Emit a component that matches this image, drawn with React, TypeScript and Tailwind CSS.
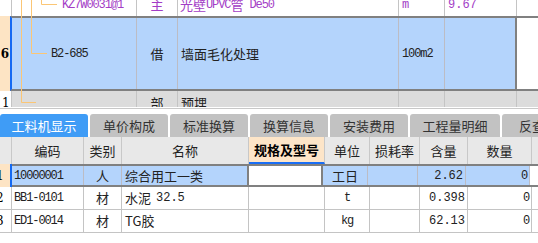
import React from "react";

const cjk = "font-['Noto_Sans_CJK_SC',sans-serif]";
const mono = "font-['Liberation_Mono','Noto_Sans_CJK_SC',monospace] text-[12px] tracking-[-1.1px]";

const tabs = [
  { label: "工料机显示", w: "w-[88px]", active: true },
  { label: "单价构成", w: "w-[78px]" },
  { label: "标准换算", w: "w-[78px]" },
  { label: "换算信息", w: "w-[78px]" },
  { label: "安装费用", w: "w-[78px]" },
  { label: "工程量明细", w: "w-[90px]" },
  { label: "反查", w: "w-[60px]" },
];

const headers = [
  { label: "编码", w: "w-[72px]" },
  { label: "类别", w: "w-[38px]" },
  { label: "名称", w: "w-[127px]" },
  { label: "规格及型号", w: "w-[76px]", hl: true },
  { label: "单位", w: "w-[45px]" },
  { label: "损耗率", w: "w-[50px]" },
  { label: "含量", w: "w-[48px]" },
  { label: "数量", w: "w-[64px]" },
];

const rows = [
  { n: "1", code: "10000001", type: "人", name: "综合用工一类", unit: "工日", qty: "2.62", num: "0", sel: true },
  { n: "2", code: "BB1-0101", type: "材", name: "水泥", spec: "32.5", unit: "t", qty: "0.398", num: "0" },
  { n: "3", code: "ED1-0014", type: "材", name: "TG胶", unit: "kg", qty: "62.13", num: "0" },
];

function TreeLines() {
  return (
    <svg className="absolute left-0 top-0 pointer-events-none" width="80" height="108">
      <g stroke="#fbc675" strokeWidth="1" fill="none">
        <path d="M41.5 0V4.5H57" />
        <path d="M31.5 0V53.5H47" />
        <path d="M21.5 0V102.5H36" />
      </g>
    </svg>
  );
}

export default function App() {
  return (
    <div className={`w-[538px] h-[243px] overflow-hidden bg-white text-[#222] ${cjk}`}>
      {/* upper grid */}
      <div className="relative h-[107px] overflow-hidden">
        <div className="flex h-[23px] -mt-[7px] text-[#a33dc6]">
          <div className="w-[12px] border-r border-[#c4c4c4]" />
          <div className="w-[125px] border-r border-[#c4c4c4] flex items-center pl-[50px]">
            <span className={mono}>KZ7W0031@1</span>
          </div>
          <div className="w-[41px] border-r border-[#c4c4c4] flex items-center justify-center text-[13px]">主</div>
          <div className="w-[221px] border-r border-[#c4c4c4] flex items-center pl-[2px] text-[13px] whitespace-nowrap">
            光壁<span className={mono}>UPVC</span>管<span className={`${mono} ml-[6px]`}>De50</span>
          </div>
          <div className="w-[46px] border-r border-[#c4c4c4] flex items-center pl-[3px]">
            <span className={mono}>m</span>
          </div>
          <div className="w-[72px] border-r border-[#c4c4c4] flex items-center pl-[3px]">
            <span className={`${mono} tracking-[0px]`}>9.67</span>
          </div>
          <div className="flex-1" />
        </div>

        <div className="flex h-[75px]">
          <div className="w-[10px] bg-[#fde4c4] flex items-center justify-center text-[12px] font-bold text-black font-['DejaVu_Serif',serif]">
            6
          </div>
          <div className="flex-1 flex border-y-2 border-[#808080] border-l-2 border-l-[#1569f2]">
            <div className="w-[125px] bg-[#b4d4fc] border-r border-[#bcbcc4] flex items-center pl-[39px]">
              <span className={mono}>B2-685</span>
            </div>
            <div className="w-[41px] bg-[#b4d4fc] border-r border-[#bcbcc4] flex items-center justify-center text-[13px]">借</div>
            <div className="w-[221px] bg-[#b4d4fc] border-r border-[#bcbcc4] flex items-center pl-[3px] text-[13px]">墙面毛化处理</div>
            <div className="w-[46px] bg-[#b4d4fc] border-r border-[#bcbcc4] flex items-center pl-[3px]">
              <span className={mono}>100m2</span>
            </div>
            <div className="w-[72px] bg-[#b4d4fc] border-r-2 border-[#808080]" />
            <div className="flex-1 bg-white" />
          </div>
        </div>

        <div className="flex h-[23px]">
          <div className="w-[12px] border-r border-[#c4c4c4] flex items-center pl-[2px] text-[12px] text-black font-['DejaVu_Serif',serif]">
            1
          </div>
          <div className="flex-1 flex bg-[#dcdcdc]">
            <div className="w-[125px] border-r border-[#c4c4c4]" />
            <div className="w-[41px] border-r border-[#c4c4c4] flex items-center justify-center text-[13px]">部</div>
            <div className="w-[221px] border-r border-[#c4c4c4] flex items-center pl-[3px] text-[13px]">预埋</div>
            <div className="w-[46px] border-r border-[#c4c4c4]" />
            <div className="w-[72px] border-r border-[#c4c4c4]" />
            <div className="flex-1" />
          </div>
        </div>
        <TreeLines />
      </div>

      <div className="h-[1px] bg-white" />
      <div className="h-[1px] bg-[#c8c8c8]" />
      <div className="h-[5px] bg-white" />

      {/* tabs */}
      <div className="flex gap-[2px] h-[23px] bg-white">
        {tabs.map((t) => (
          <div
            key={t.label}
            className={`${t.w} shrink-0 flex items-center justify-center text-[13px] rounded-t-[3px] whitespace-nowrap ${
              t.active ? "bg-[#3f9cf6] text-white rounded-none" : "bg-[#c2c2c2] text-[#333]"
            }`}
          >
            {t.label}
          </div>
        ))}
      </div>

      {/* header */}
      <div className="flex h-[27px] bg-[#e8e8e8] text-[13px] text-[#222]">
        <div className="w-[12px] border-r border-[#c8c8c8]" />
        {headers.map((h) => (
          <div
            key={h.label}
            className={`${h.w} shrink-0 flex items-center justify-center border-r border-[#c8c8c8] ${
              h.hl ? "bg-[#fde5c8] font-bold border-b-2 border-b-[#1a6ef5] text-black" : ""
            }`}
          >
            {h.label}
          </div>
        ))}
        <div className="flex-1" />
      </div>

      {/* rows */}
      {rows.map((r) =>
        r.sel ? (
          <div key={r.n} className="flex h-[23px]">
            <div className="w-[12px] bg-[#fde4c4] border-r-2 border-[#1569f2] overflow-hidden flex items-center">
              <span className="-ml-[4px] text-[12px] font-['DejaVu_Serif',serif] text-black">{r.n}</span>
            </div>
            <div className="flex-1 flex border-y-2 border-[#808080]">
              <div className="w-[72px] shrink-0 bg-[#b4d4fc] border-r border-[#bcbcc4] flex items-center pl-[2px]">
                <span className={mono}>{r.code}</span>
              </div>
              <div className="w-[38px] shrink-0 bg-[#b4d4fc] border-r border-[#bcbcc4] flex items-center justify-center text-[13px]">{r.type}</div>
              <div className="w-[127px] shrink-0 bg-[#b4d4fc] border-r-2 border-[#808080] flex items-center pl-[3px] text-[13px]">{r.name}</div>
              <div className="w-[74px] shrink-0 bg-white border-r-2 border-[#808080]" />
              <div className="w-[45px] shrink-0 bg-[#b4d4fc] border-r border-[#bcbcc4] flex items-center justify-center text-[13px]">{r.unit}</div>
              <div className="w-[50px] shrink-0 bg-[#b4d4fc] border-r border-[#bcbcc4]" />
              <div className="w-[48px] shrink-0 bg-[#b4d4fc] border-r border-[#bcbcc4] flex items-center justify-end pr-[2px]">
                <span className={`${mono} tracking-[0px]`}>{r.qty}</span>
              </div>
              <div className="w-[64px] shrink-0 bg-[#b4d4fc] border-r border-[#bcbcc4] flex items-center justify-end pr-[2px]">
                <span className={mono}>{r.num}</span>
              </div>
              <div className="flex-1 bg-white" />
            </div>
          </div>
        ) : (
          <div key={r.n} className="flex h-[23px] border-b border-[#c4c4c4]">
            <div className="w-[12px] bg-white border-r border-[#c4c4c4] overflow-hidden flex items-center">
              <span className="-ml-[4px] text-[12px] font-['DejaVu_Serif',serif] text-black">{r.n}</span>
            </div>
            <div className="w-[72px] shrink-0 border-r border-[#c4c4c4] flex items-center pl-[2px]">
              <span className={mono}>{r.code}</span>
            </div>
            <div className="w-[38px] shrink-0 border-r border-[#c4c4c4] flex items-center justify-center text-[13px]">{r.type}</div>
            <div className="w-[127px] shrink-0 border-r border-[#c4c4c4] flex items-center pl-[3px] text-[13px] whitespace-nowrap">
              {r.name}
              {r.spec && <span className={`${mono} ml-[5px] tracking-[0px]`}>{r.spec}</span>}
            </div>
            <div className="w-[76px] shrink-0 border-r border-[#c4c4c4]" />
            <div className="w-[45px] shrink-0 border-r border-[#c4c4c4] flex items-center justify-center">
              <span className={mono}>{r.unit}</span>
            </div>
            <div className="w-[50px] shrink-0 border-r border-[#c4c4c4]" />
            <div className="w-[48px] shrink-0 border-r border-[#c4c4c4] flex items-center justify-end pr-[2px]">
              <span className={`${mono} tracking-[0px]`}>{r.qty}</span>
            </div>
            <div className="w-[64px] shrink-0 border-r border-[#c4c4c4] flex items-center justify-end pr-[2px]">
              <span className={mono}>{r.num}</span>
            </div>
            <div className="flex-1" />
          </div>
        )
      )}
    </div>
  );
}
